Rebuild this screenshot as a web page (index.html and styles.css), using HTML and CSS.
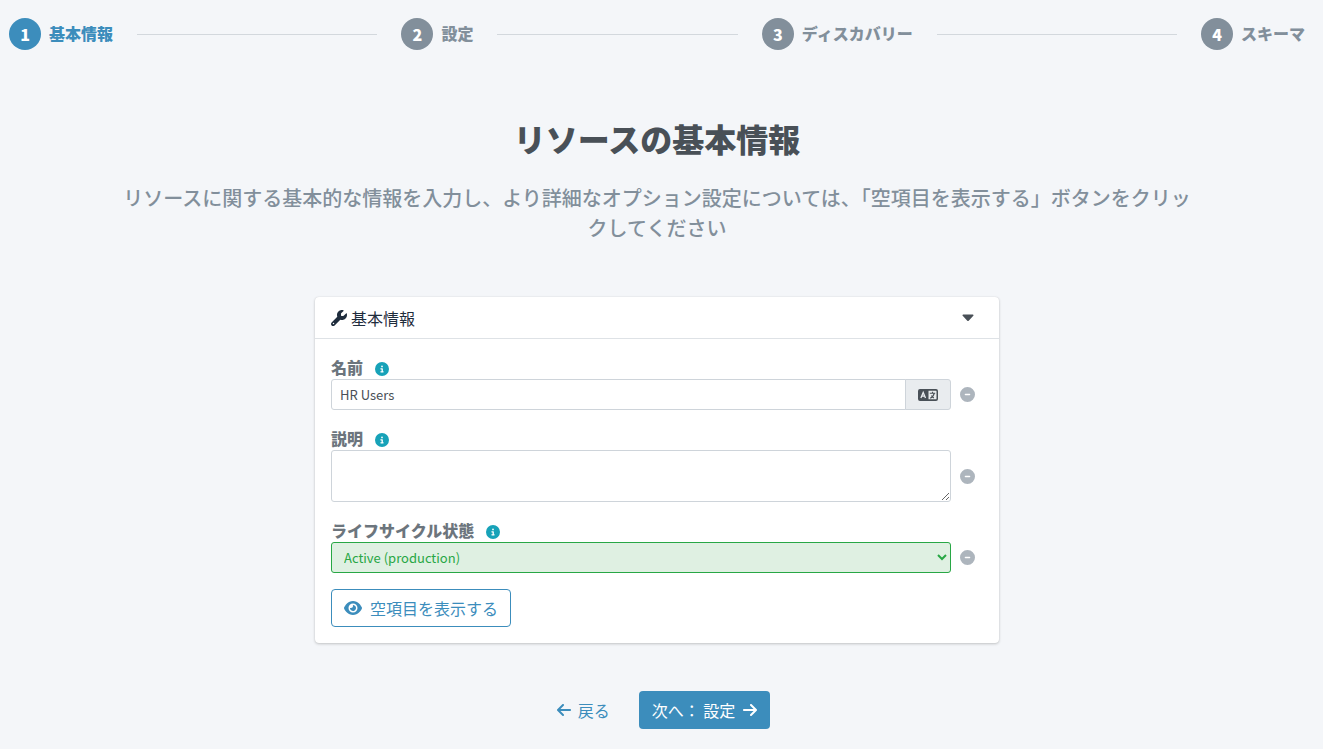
FILE: index.html
```
<!DOCTYPE html>
<html lang="ja">
<head>
  <meta charset="UTF-8" />
  <meta name="viewport" content="width=device-width, initial-scale=1.0"/>
  <title>リソースの基本情報</title>
  <link rel="stylesheet" href="styles.css">
</head>
<body>

  <!-- Iconos -->
  <svg class="sprite" aria-hidden="true">
    <symbol id="i-wrench" viewBox="0 0 512 512"><path d="M352 320c88.400 0 160-71.600 160-160c0-15.300-2.200-30.100-6.200-44.200c-3.100-10.800-16.400-13.200-24.300-5.300l-76.800 76.800c-3 3-7.100 4.700-11.300 4.700L336 192c-8.800 0-16-7.200-16-16l0-57.400c0-4.200 1.700-8.300 4.700-11.300l76.800-76.800c7.900-7.900 5.400-21.200-5.300-24.300C382.100 2.200 367.300 0 352 0C263.600 0 192 71.600 192 160c0 19.100 3.400 37.500 9.500 54.500L19.900 396.100C7.200 408.800 0 426.100 0 444.100C0 481.600 30.400 512 67.900 512c18 0 35.300-7.200 48-19.900L297.500 310.500c17 6.200 35.400 9.500 54.500 9.500zM80 408a24 24 0 1 1 0 48 24 24 0 1 1 0-48z"/></symbol>
    <symbol id="i-info" viewBox="0 0 512 512"><path d="M256 512A256 256 0 1 0 256 0a256 256 0 1 0 0 512zM216 336l24 0 0-64-24 0c-13.300 0-24-10.700-24-24s10.700-24 24-24l48 0c13.300 0 24 10.700 24 24l0 88 8 0c13.300 0 24 10.700 24 24s-10.700 24-24 24l-80 0c-13.300 0-24-10.700-24-24s10.700-24 24-24zm40-208a32 32 0 1 1 0 64 32 32 0 1 1 0-64z"/></symbol>
    <symbol id="i-minus" viewBox="0 0 512 512"><path d="M256 512A256 256 0 1 0 256 0a256 256 0 1 0 0 512zM184 232l144 0c13.300 0 24 10.700 24 24s-10.700 24-24 24l-144 0c-13.300 0-24-10.700-24-24s10.700-24 24-24z"/></symbol>
    <symbol id="i-eye" viewBox="0 0 576 512"><path d="M288 32c-80.800 0-145.500 36.800-192.600 80.600C48.600 156 17.300 208 2.500 243.700c-3.300 7.900-3.300 16.700 0 24.600C17.300 304 48.600 356 95.400 399.400C142.500 443.200 207.200 480 288 480s145.500-36.800 192.600-80.600c46.800-43.500 78.100-95.400 93-131.100c3.300-7.900 3.300-16.700 0-24.600c-14.900-35.700-46.200-87.700-93-131.100C433.500 68.800 368.800 32 288 32zM144 256a144 144 0 1 1 288 0 144 144 0 1 1 -288 0zm144-64c0 35.300-28.700 64-64 64c-7.100 0-13.900-1.200-20.300-3.300c-5.500-1.800-11.900 1.600-11.700 7.400c.3 6.900 1.300 13.800 3.200 20.700c13.700 51.200 66.400 81.600 117.600 67.900s81.600-66.400 67.900-117.600c-11.100-41.500-47.800-69.400-88.600-71.100c-5.800-.2-9.200 6.100-7.400 11.700c2.100 6.400 3.300 13.200 3.300 20.300z"/></symbol>
    <symbol id="i-caret" viewBox="0 0 12 8"><path d="M1.200.5h9.600c.7 0 1 .8.500 1.300L6.700 6.700c-.4.4-1 .4-1.400 0L.7 1.800C.2 1.300.5.500 1.200.5z"/></symbol>
    <symbol id="i-left" viewBox="0 0 448 512"><path d="M9.400 233.400c-12.500 12.500-12.500 32.800 0 45.300l160 160c12.500 12.500 32.800 12.500 45.300 0s12.500-32.800 0-45.300L109.200 288 416 288c17.700 0 32-14.300 32-32s-14.300-32-32-32l-306.700 0L214.600 118.600c12.500-12.500 12.500-32.800 0-45.300s-32.800-12.500-45.300 0l-160 160z"/></symbol>
    <symbol id="i-right" viewBox="0 0 448 512"><path d="M438.600 278.600c12.500-12.500 12.500-32.800 0-45.300l-160-160c-12.500-12.500-32.800-12.500-45.300 0s-12.500 32.800 0 45.300L338.800 224 32 224c-17.700 0-32 14.300-32 32s14.300 32 32 32l306.700 0L233.400 393.400c-12.500 12.500-12.500 32.800 0 45.300s32.800 12.500 45.300 0l160-160z"/></symbol>
    <symbol id="i-lang" viewBox="0 0 20 12">
      <path fill-rule="evenodd" d="M2 0h16a2 2 0 0 1 2 2v8a2 2 0 0 1-2 2H2a2 2 0 0 1-2-2V2a2 2 0 0 1 2-2zM10.500 1.700v8.600h7.500a.5.500 0 0 0 .5-.5V2.200a.5.500 0 0 0-.5-.5z"/>
      <path class="lang-a" d="M2.900 8.900L5.200 3.400 7.500 8.900M3.700 7.200h3"/>
      <path class="lang-b" d="M11.800 4.200h5.400M14.500 2.700v1.500M16.200 4.400c-.5 2.300-1.900 4-4 4.900M13.500 6.500c.6 1.200 1.400 2 2.400 2.500"/>
    </symbol>
  </svg>

  <!-- Pasos del asistente -->
  <ol class="stepper">
    <li class="step active"><span class="step-circle">1</span><span class="step-label">基本情報</span></li>
    <li class="line" aria-hidden="true"></li>
    <li class="step"><span class="step-circle">2</span><span class="step-label">設定</span></li>
    <li class="line" aria-hidden="true"></li>
    <li class="step"><span class="step-circle">3</span><span class="step-label">ディスカバリー</span></li>
    <li class="line" aria-hidden="true"></li>
    <li class="step"><span class="step-circle">4</span><span class="step-label">スキーマ</span></li>
  </ol>

  <main class="content">
    <h1>リソースの基本情報</h1>
    <p class="intro">リソースに関する基本的な情報を入力し、より詳細なオプション設定については、「空項目を表示する」ボタンをクリックしてください</p>

    <form class="wizard">
      <section class="card">
        <header class="card-header">
          <svg class="icon-wrench"><use href="#i-wrench"/></svg>
          <h2>基本情報</h2>
          <button type="button" class="toggle" aria-label="折りたたむ"><svg class="icon-caret"><use href="#i-caret"/></svg></button>
        </header>

        <div class="card-body">
          <div class="field">
            <div class="field-label"><label for="name">名前</label><svg class="icon-info"><use href="#i-info"/></svg></div>
            <div class="field-row">
              <div class="input-group">
                <input type="text" id="name" value="HR Users">
                <button type="button" class="lang" aria-label="翻訳"><svg class="icon-lang"><use href="#i-lang"/></svg></button>
              </div>
              <button type="button" class="remove" aria-label="削除"><svg><use href="#i-minus"/></svg></button>
            </div>
          </div>

          <div class="field">
            <div class="field-label"><label for="description">説明</label><svg class="icon-info"><use href="#i-info"/></svg></div>
            <div class="field-row">
              <textarea id="description" rows="2"></textarea>
              <button type="button" class="remove" aria-label="削除"><svg><use href="#i-minus"/></svg></button>
            </div>
          </div>

          <div class="field">
            <div class="field-label"><label for="lifecycle">ライフサイクル状態</label><svg class="icon-info"><use href="#i-info"/></svg></div>
            <div class="field-row">
              <select id="lifecycle">
                <option>Active (production)</option>
              </select>
              <button type="button" class="remove" aria-label="削除"><svg><use href="#i-minus"/></svg></button>
            </div>
          </div>

          <button type="button" class="btn btn-outline"><svg class="icon-eye"><use href="#i-eye"/></svg>空項目を表示する</button>
        </div>
      </section>

      <div class="actions">
        <button type="button" class="btn btn-link"><svg class="icon-arrow"><use href="#i-left"/></svg>戻る</button>
        <button type="submit" class="btn btn-primary">次へ： 設定<svg class="icon-arrow"><use href="#i-right"/></svg></button>
      </div>
    </form>
  </main>

</body>
</html>
```
FILE: styles.css
```
* {
  box-sizing: border-box;
}

body {
  margin: 0;
  padding: 18px 18px 20px 9px;
  background-color: #f4f6f9;
  color: #495057;
  font-family: "Noto Sans CJK JP", sans-serif;
  font-size: 16px;
  line-height: 24px;
}

button, input, select, textarea {
  font-family: inherit;
  color: inherit;
}

button {
  cursor: pointer;
}

svg {
  display: block;
  flex: none;
  fill: currentColor;
}

.sprite {
  display: none;
}

/* Pasos */
.stepper {
  display: flex;
  align-items: center;
  gap: 24px;
  margin: 0;
  padding: 0;
  list-style: none;
}

.step {
  display: flex;
  align-items: center;
  gap: 8px;
  color: #828f9b;
  font-weight: 900;
  white-space: nowrap;
}

.step-circle {
  width: 32px;
  height: 32px;
  border-radius: 50%;
  background-color: #828f9b;
  color: #fff;
  line-height: 32px;
  text-align: center;
}

.step-label {
  padding-bottom: 2px;
}

.step.active {
  color: #3c8dbc;
}

.step.active .step-circle {
  background-color: #3c8dbc;
}

.line {
  flex: 1;
  height: 1px;
  background-color: #d3d8dd;
}

.content {
  display: flex;
  flex-direction: column;
  align-items: center;
  padding-top: 69px;
}

h1 {
  margin: 0;
  font-size: 32px;
  line-height: 38px;
  font-weight: 900;
}

.intro {
  max-width: 1080px;
  margin: 26px 0 54px;
  color: #828f9b;
  font-size: 20px;
  line-height: 30px;
  font-weight: 500;
  text-align: center;
}

.wizard {
  width: 100%;
  max-width: 684px;
}

/* Tarjeta */
.card {
  background-color: #fff;
  border-radius: 4px;
  box-shadow: 0 0 1px rgba(0,0,0,0.13), 0 1px 3px rgba(0,0,0,0.2);
}

.card-header {
  display: flex;
  align-items: center;
  gap: 4px;
  height: 42px;
  padding: 0 16px;
  border-bottom: 1px solid #dee2e6;
  color: #1f2d3d;
}

.card-header h2 {
  margin: 0;
  font-size: 16px;
  font-weight: 400;
}

.toggle {
  margin-left: auto;
  padding: 8px;
  border: none;
  background: none;
  color: #495057;
}

.card-body {
  padding: 16px;
}

.field {
  margin-bottom: 16px;
}

.field-label {
  display: flex;
  align-items: center;
  gap: 12px;
  color: #6c757d;
  font-weight: 900;
}

.field-row {
  display: flex;
  align-items: center;
  gap: 9px;
  padding-right: 8px;
}

.input-group {
  display: flex;
  flex: 1;
}

input, textarea, select {
  flex: 1;
  min-width: 0;
  height: 31px;
  padding: 4px 8px;
  border: 1px solid #ced4da;
  border-radius: 3px;
  background-color: #fff;
  font-size: 13px;
  line-height: 20px;
}

.input-group input {
  border-radius: 3px 0 0 3px;
}

textarea {
  height: 52px;
  resize: vertical;
}

select {
  border-color: #28a745;
  background-color: #dff0e2;
  color: #28a745;
}

.lang {
  width: 46px;
  margin-left: -1px;
  padding: 0 12px;
  border: 1px solid #ced4da;
  border-radius: 0 3px 3px 0;
  background-color: #e9ecef;
}

.remove {
  padding: 0;
  border: none;
  background: none;
  color: #adb5bd;
}

.remove svg {
  width: 15px;
  height: 15px;
}

.icon-wrench {
  width: 16px;
  height: 16px;
}

.icon-caret {
  width: 14px;
  height: 8px;
}

.icon-info {
  width: 14px;
  height: 14px;
  margin-top: 3px;
  color: #17a2b8;
}

.icon-lang {
  width: 20px;
  height: 12px;
}

.lang-a, .lang-b {
  fill: none;
  stroke: #e9ecef;
  stroke-width: 1.3;
}

.lang-b {
  stroke: #495057;
  stroke-width: 1.1;
}

.icon-eye {
  width: 18px;
  height: 16px;
}

.icon-arrow {
  width: 14px;
  height: 16px;
}

/* Botones */
.btn {
  display: inline-flex;
  align-items: center;
  gap: 8px;
  height: 38px;
  padding: 0 12px;
  border: 1px solid transparent;
  border-radius: 4px;
  background: none;
  color: #3c8dbc;
  font-size: 16px;
  line-height: 24px;
}

.btn-outline {
  border-color: #3c8dbc;
}

.btn-link {
  gap: 7px;
}

.btn-primary {
  background-color: #3c8dbc;
  color: #fff;
}

.actions {
  display: flex;
  justify-content: center;
  gap: 16px;
  padding-top: 48px;
}
```
